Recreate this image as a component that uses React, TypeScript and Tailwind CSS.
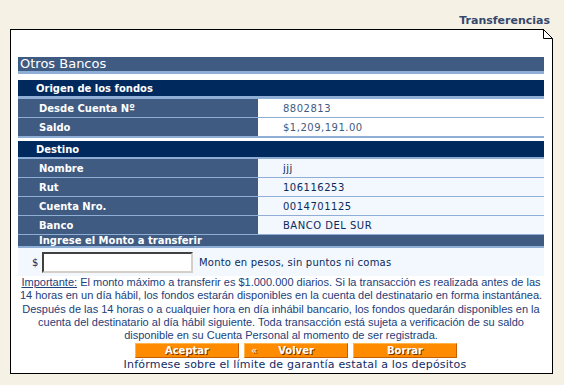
import React from "react";

// filas de la tabla de datos
const Row = ({
  label,
  value,
  light,
  last,
}: {
  label: string;
  value: string;
  light?: boolean;
  last?: boolean;
}) => (
  <div
    className={`flex ${last ? "h-[20px] border-b-2" : "h-[19px] border-b"} border-[#8eaed6]`}
  >
    <div className="w-[240px] bg-[#3f5b82] pl-[21px] flex items-center text-[10px] font-bold text-white">
      {label}
    </div>
    <div
      className={`flex-1 pl-[25px] flex items-center text-[10px] tracking-[0.5px] ${
        light ? "bg-[#f2f8fe] text-[#0b2a5c]" : "bg-white text-[#3f5b82]"
      }`}
    >
      {value}
    </div>
  </div>
);

const SectionBar = ({ title }: { title: string }) => (
  <div className="h-[19px] bg-[#002a5e] border-b-[3px] border-[#8eaed6] pl-[18px] flex items-center text-[10px] font-bold text-white">
    {title}
  </div>
);

const OrangeButton = ({ children }: { children: React.ReactNode }) => (
  <button className="relative w-[104px] h-[15px] bg-[#ff8c00] border border-t-[#ffb64d] border-l-[#ffb64d] border-r-[#c45e00] border-b-[#c45e00] text-white text-[10px] font-bold leading-[13px] [text-shadow:1px_1px_0_#7a3300]">
    {children}
  </button>
);

export default function App() {
  return (
    <div className="w-[564px] h-[385px] bg-[#f5f1e5] font-['DejaVu_Sans',sans-serif] overflow-hidden">
      <div className="h-[29px] flex items-end justify-end pr-[14px] pb-[2px]">
        <span className="text-[11px] font-bold text-[#34486e] leading-[13px]">
          Transferencias
        </span>
      </div>

      <div className="relative ml-[10px] w-[543px] h-[345px] border border-black bg-white pt-[27px] pl-[7px] pr-[8px]">
        {/* esquina doblada */}
        <svg
          className="absolute -top-px -right-px"
          width="10"
          height="10"
          viewBox="0 0 10 10"
        >
          <polygon points="0,0 10,0 10,10" fill="#f5f1e5" />
          <polyline
            points="0.5,0 0.5,9.5 9.5,9.5"
            fill="white"
            stroke="black"
            strokeWidth="1"
          />
          <line x1="0.5" y1="0.5" x2="9.5" y2="9.5" stroke="black" strokeWidth="1" />
        </svg>

        <div className="h-[17px] bg-[#3f5b82] border-b-[3px] border-[#8eaed6] pl-[2px] flex items-center text-[13px] text-white leading-[14px]">
          Otros Bancos
        </div>

        <div className="h-[6px]" />
        <SectionBar title="Origen de los fondos" />
        <Row label="Desde Cuenta Nº" value="8802813" />
        <Row label="Saldo" value="$1,209,191.00" last />

        <div className="h-[3px]" />
        <div className="h-[18px] bg-[#002a5e] border-b-2 border-[#8eaed6] pl-[18px] flex items-center text-[10px] font-bold text-white">
          Destino
        </div>
        <Row label="Nombre" value="jjj" light />
        <Row label="Rut" value="106116253" light />
        <Row label="Cuenta Nro." value="0014701125" light />
        <Row label="Banco" value="BANCO DEL SUR" light />

        <div className="h-[13px] bg-[#3f5b82] border-b-2 border-[#8eaed6] pl-[21px] flex items-center text-[10px] font-bold text-white leading-[11px]">
          Ingrese el Monto a transferir
        </div>

        <div className="h-[28px] bg-[#f2f8fe] flex items-center pl-[14px]">
          <span className="text-[10px] text-[#0b2a5c] w-[10px]">$</span>
          <input
            className="w-[151px] h-[21px] bg-white border-2 border-t-[#404040] border-l-[#404040] border-r-[#d4d0c8] border-b-[#d4d0c8] outline-none"
            type="text"
          />
          <span className="ml-[6px] text-[10px] text-[#0b2a5c] tracking-[0.2px]">
            Monto en pesos, sin puntos ni comas
          </span>
        </div>

        <p className="text-center font-['Liberation_Sans',Arial,sans-serif] text-[11px] leading-[13.25px] text-[#22407a]">
          <span className="underline">Importante:</span> El monto máximo a transferir es
          $1.000.000 diarios. Si la transacción es realizada antes de las
          <br />
          14 horas en un día hábil, los fondos estarán disponibles en la cuenta del
          destinatario en forma instantánea.
          <br />
          Después de las 14 horas o a cualquier hora en día inhábil bancario, los fondos
          quedarán disponibles en la
          <br />
          cuenta del destinatario al día hábil siguiente. Toda transacción está sujeta a
          verificación de su saldo
          <br />
          disponible en su Cuenta Personal al momento de ser registrada.
        </p>

        <div className="mt-[1px] ml-[117px] flex gap-[5px]">
          <OrangeButton>Aceptar</OrangeButton>
          <OrangeButton>
            <span className="absolute left-[6px] top-0 font-normal">«</span>
            Volver
          </OrangeButton>
          <OrangeButton>Borrar</OrangeButton>
        </div>

        <div className="h-[13px] pl-[28px] text-center text-[11px] leading-[13px] text-[#0e2c66] tracking-[0.2px] whitespace-nowrap">
          Infórmese sobre el límite de garantía estatal a los depósitos
        </div>
      </div>
    </div>
  );
}
